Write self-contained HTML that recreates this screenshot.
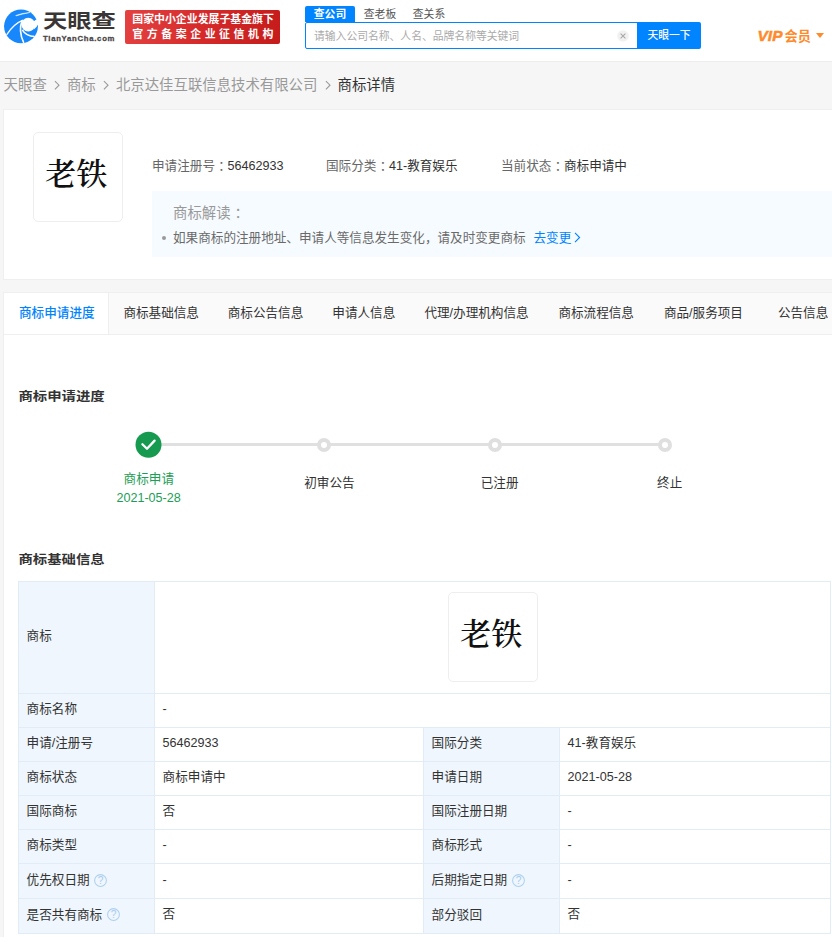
<!DOCTYPE html>
<html lang="zh-CN">
<head>
<meta charset="utf-8">
<title>老铁 - 商标详情 - 天眼查</title>
<style>
*{box-sizing:border-box;margin:0;padding:0}
html,body{width:832px;height:937px;overflow:hidden}
body{background:#f6f6f6;font-family:"Liberation Sans","Noto Sans CJK SC",sans-serif;font-size:12.6px;line-height:18px;color:#333;position:relative}
.a{position:absolute;white-space:nowrap}
.c{position:relative;left:0.27em}
/* header */
#hd{position:absolute;left:0;top:0;width:832px;height:62px;background:#fff;border-bottom:1px solid #ededed}
#logo-ico{position:absolute;left:0;top:5px;width:45px;height:43px}
#logo-t{left:42.6px;top:6.1px;font-size:20px;line-height:30px;font-weight:700;color:#3b3636;transform-origin:0 50%;transform:scale(1.213,0.99)}
#logo-s{left:43.2px;top:32px;font-size:12px;line-height:14px;font-weight:700;color:#4a4646;-webkit-text-stroke:0.45px #4a4646;letter-spacing:1.1px;transform-origin:0 50%;transform:scale(0.645,0.6)}
#badge{position:absolute;left:125px;top:10px;width:155px;height:34px;border-radius:2px;background:linear-gradient(100deg,#e44141 0%,#d62a2a 50%,#c51b1b 100%);color:#fff;font-weight:700;font-size:10.9px;line-height:14px}
#badge span{position:absolute;left:7.3px;white-space:nowrap}
#badge .l1{top:2.4px}
#badge .l2{top:17px;letter-spacing:3.58px}
#stabs{position:absolute;left:305px;top:6px;height:16px;font-size:10.8px;line-height:16px;white-space:nowrap}
#stabs span{position:absolute;top:0;height:16px;width:50px;text-align:center;color:#555;line-height:17.4px}
#stabs .on{left:0;background:#0084ff;color:#fff;border-radius:2px 2px 0 0;font-weight:700}
#sbox{position:absolute;left:305px;top:22px;width:333px;height:27px;border:1px solid #0084ff;background:#fff;border-radius:2px 0 0 2px}
#sbox .ph{left:8px;top:4.9px;line-height:16px;font-size:10.8px;color:#aaa}
#sbox .clr{position:absolute;left:311px;top:7px;width:12px;height:12px}
#sbtn{position:absolute;left:637px;top:22px;width:64px;height:27px;background:#0084ff;color:#fff;font-size:10.8px;font-weight:500;line-height:26px;text-align:center;border-radius:0 2px 2px 0}
#vip{left:757.4px;top:27.2px;font-size:15.4px;line-height:18px;font-weight:700;font-style:italic;color:#ff8a2b;-webkit-text-stroke:0.5px #ff8a2b;letter-spacing:0.2px}
#vip2{left:784.6px;top:27.5px;font-size:13.1px;line-height:18px;font-weight:700;color:#ff8a2b}
#car{position:absolute;left:816px;top:33px;width:0;height:0;border-left:4px solid transparent;border-right:4px solid transparent;border-top:5px solid #ff8a2b}
/* breadcrumb */
#bc{left:3.6px;top:75px;font-size:14.4px;line-height:20px;color:#999}
#bc b{font-weight:400;color:#333}
#bc svg{display:inline-block;width:6.4px;height:11px;margin:0 6.6px 0 7.2px;vertical-align:-1.4px}
/* card1 */
#c1{position:absolute;left:3px;top:109px;width:831px;height:171px;background:#fff;border:1px solid #efefef}
.tm{position:absolute;width:90px;height:90px;border:1px solid #eee;border-radius:5px;background:#fff}
.tm span{position:absolute;left:-1.8px;top:-1.6px;width:88px;height:88px;font-family:"Liberation Serif","Noto Serif CJK SC",serif;font-size:31px;line-height:88px;text-align:center;color:#111;font-weight:600;white-space:nowrap}
.info{top:157.3px;color:#333}
.info em{font-style:normal;color:#666}
#tip{position:absolute;left:152px;top:191px;width:680px;height:66px;background:#f6fbff}
#tip .t{left:21px;top:11.8px;font-size:14.4px;line-height:20px;color:#999}
#tip .d{left:21px;top:37.6px;color:#6a6a6a}
#tip .lk{left:381.5px;top:37.6px;color:#0084ff}
#tip .dot{position:absolute;left:10px;top:45px;width:4px;height:4px;border-radius:50%;background:#999}
#tip svg{position:absolute;left:422px;top:41px;width:7px;height:11px}
/* tabs */
#tabs{position:absolute;left:3px;top:292px;width:831px;height:43px;background:#fafafa;border:1px solid #efefef}
#tabs span{position:absolute;top:11px;color:#333;white-space:nowrap}
#tabs i{position:absolute;left:0;top:0;width:105px;height:41px;background:#fff;border-right:1px solid #efefef}
#tabs .on{color:#0084ff;font-weight:500}
/* main */
#main{position:absolute;left:3px;top:335px;width:831px;height:610px;background:#fff;border-left:1px solid #efefef}
.h{font-size:14.4px;line-height:20px;font-weight:700;color:#333;left:18.4px;transform:scaleY(0.86);transform-origin:0 54%}
/* progress */
#line{position:absolute;left:150px;top:443px;width:515px;height:3px;background:#e0e0e0}
.nd{position:absolute;top:437.5px;width:14.4px;height:14.4px;border-radius:50%;border:4.2px solid #dfdfdf;background:#fff}
#ok{position:absolute;left:135px;top:431px;width:27px;height:27px}
.lb{color:#333;text-align:center;transform:translateX(-50%)}
.g{color:#1c9e55}
/* table */
#tb{position:absolute;left:18px;top:581px;width:813px;height:353px;border:1px solid #e2ecf6;background:#fff}
.kb{position:absolute;background:#eff6fd}
.hl{position:absolute;left:18px;width:813px;height:1px;background:#e2ecf6}
.vl{position:absolute;width:1px;background:#e2ecf6}
.q{position:absolute;width:13px;height:13px}
</style>
</head>
<body>
<div id="hd">
  <svg id="logo-ico" viewBox="0 0 832 795">
    <circle cx="388" cy="395" r="313" fill="#1787fb"/>
    <circle cx="522" cy="364" r="126" fill="#fff"/>
    <path d="M625 300 L664 272 L760 250 L760 372 L698 364 Q678 420 625 452 L600 350Z" fill="#fff"/>
    <path d="M425 280 Q250 350 122 552" fill="none" stroke="#fff" stroke-width="23"/>
    <path d="M408 285 Q335 480 440 700" fill="none" stroke="#fff" stroke-width="30"/>
    <path d="M412 462 Q480 580 640 583" fill="none" stroke="#fff" stroke-width="28"/>
    <path d="M290 195 Q400 150 555 138 Q420 165 300 200Z" fill="#fff" stroke="#fff" stroke-width="9" stroke-linejoin="round"/>
  </svg>
  <div id="logo-t" class="a">天眼查</div>
  <div id="logo-s" class="a">TianYanCha.com</div>
  <div id="badge"><span class="l1">国家中小企业发展子基金旗下</span><span class="l2">官方备案企业征信机构</span></div>
  <div id="stabs"><span class="on">查公司</span><span style="left:50px">查老板</span><span style="left:99px">查关系</span></div>
  <div id="sbox"><span class="ph a">请输入公司名称、人名、品牌名称等关键词</span><svg class="clr" viewBox="0 0 12 12"><circle cx="6" cy="6" r="5.8" fill="#f1f1f1"/><path d="M3.6 3.6L8.4 8.4M8.4 3.6L3.6 8.4" stroke="#a8a8a8" stroke-width="1.1" fill="none"/></svg></div>
  <div id="sbtn">天眼一下</div>
  <div id="vip" class="a">VIP</div><div id="vip2" class="a">会员</div>
  <div id="car"></div>
</div>
<div id="bc" class="a">天眼查<svg viewBox="0 0 6.4 11"><path d="M0.9 1.1L5 5.2L0.9 9.3" fill="none" stroke="#999" stroke-width="1.1"/></svg>商标<svg viewBox="0 0 6.4 11"><path d="M0.9 1.1L5 5.2L0.9 9.3" fill="none" stroke="#999" stroke-width="1.1"/></svg>北京达佳互联信息技术有限公司<svg viewBox="0 0 6.4 11"><path d="M0.9 1.1L5 5.2L0.9 9.3" fill="none" stroke="#999" stroke-width="1.1"/></svg><b>商标详情</b></div>
<div id="c1"></div>
<div class="tm" style="left:33px;top:132px"><span>老铁</span></div>
<div class="info a" style="left:152px"><em>申请注册号<span class="c">：</span></em>56462933</div>
<div class="info a" style="left:326px"><em>国际分类<span class="c">：</span></em>41-教育娱乐</div>
<div class="info a" style="left:501px"><em>当前状态<span class="c">：</span></em>商标申请中</div>
<div id="tip"><span class="t a">商标解读<span class="c">：</span></span><span class="dot"></span><span class="d a">如果商标的注册地址、申请人等信息发生变化，请及时变更商标</span><span class="lk a">去变更</span><svg viewBox="0 0 7 11"><path d="M1 0.8L5.6 5.5L1 10.2" fill="none" stroke="#0084ff" stroke-width="1.1"/></svg></div>
<div id="tabs"><i></i><span class="on" style="left:15.0px">商标申请进度</span><span style="left:119.4px">商标基础信息</span><span style="left:223.7px">商标公告信息</span><span style="left:328.3px">申请人信息</span><span style="left:420.4px">代理/办理机构信息</span><span style="left:554.4px">商标流程信息</span><span style="left:659.9px">商品/服务项目</span><span style="left:773.9px">公告信息</span></div>
<div id="main"></div>
<div class="h a" style="top:387.4px">商标申请进度</div>
<div id="line"></div>
<svg id="ok" viewBox="0 0 27 27"><circle cx="13.5" cy="13.8" r="13" fill="#169a4f"/><path d="M7.4 13.2 L12 17.8 L19.6 9.6" fill="none" stroke="#fff" stroke-width="2.3" stroke-linecap="round" stroke-linejoin="round"/></svg>
<div class="nd" style="left:317.1px"></div><div class="nd" style="left:487.8px"></div><div class="nd" style="left:657.8px"></div>
<div class="lb a g" style="left:148.8px;top:470px">商标申请</div>
<div class="lb a g" style="left:148.6px;top:489px">2021-05-28</div>
<div class="lb a" style="left:329.4px;top:474px">初审公告</div>
<div class="lb a" style="left:499.6px;top:474px">已注册</div>
<div class="lb a" style="left:669.7px;top:474px">终止</div>
<div class="h a" style="top:549.9px">商标基础信息</div>
<div id="tb"></div>
<div class="kb" style="left:19px;top:582px;width:135px;height:351px"></div>
<div class="kb" style="left:424px;top:728px;width:135px;height:205px"></div>
<div class="hl" style="top:693px"></div><div class="hl" style="top:727px"></div><div class="hl" style="top:761px"></div><div class="hl" style="top:795px"></div><div class="hl" style="top:829px"></div><div class="hl" style="top:863px"></div><div class="hl" style="top:898px"></div>
<div class="vl" style="left:154px;top:581px;height:353px"></div><div class="vl" style="left:423px;top:727px;height:207px"></div><div class="vl" style="left:559px;top:727px;height:207px"></div>
<div class="tm" style="left:448px;top:592px"><span>老铁</span></div>
<div class="a" style="left:26.6px;top:626.7px">商标</div>
<div class="a" style="left:26.6px;top:700.3px">商标名称</div><div class="a" style="left:162.6px;top:700.3px">-</div>
<div class="a" style="left:26.6px;top:734.3px">申请/注册号</div><div class="a" style="left:162.6px;top:734.3px">56462933</div><div class="a" style="left:431.6px;top:734.3px">国际分类</div><div class="a" style="left:567.6px;top:734.3px">41-教育娱乐</div>
<div class="a" style="left:26.6px;top:768.3px">商标状态</div><div class="a" style="left:162.6px;top:768.3px">商标申请中</div><div class="a" style="left:431.6px;top:768.3px">申请日期</div><div class="a" style="left:567.6px;top:768.3px">2021-05-28</div>
<div class="a" style="left:26.6px;top:802.3px">国际商标</div><div class="a" style="left:162.6px;top:802.3px">否</div><div class="a" style="left:431.6px;top:802.3px">国际注册日期</div><div class="a" style="left:567.6px;top:802.3px">-</div>
<div class="a" style="left:26.6px;top:836.3px">商标类型</div><div class="a" style="left:162.6px;top:836.3px">-</div><div class="a" style="left:431.6px;top:836.3px">商标形式</div><div class="a" style="left:567.6px;top:836.3px">-</div>
<div class="a" style="left:26.6px;top:870.7px">优先权日期</div><div class="a" style="left:162.6px;top:870.7px">-</div><div class="a" style="left:431.6px;top:870.7px">后期指定日期</div><div class="a" style="left:567.6px;top:870.7px">-</div>
<div class="a" style="left:26.6px;top:905.7px">是否共有商标</div><div class="a" style="left:162.6px;top:904.7px">否</div><div class="a" style="left:431.6px;top:905.7px">部分驳回</div><div class="a" style="left:567.6px;top:904.7px">否</div>
<svg class="q" style="left:94.4px;top:873.5px" viewBox="0 0 13 13"><circle cx="6.5" cy="6.5" r="5.9" fill="none" stroke="#add0f1" stroke-width="1.05"/><text x="6.5" y="10.2" font-size="10.2" font-family="Liberation Sans, sans-serif" text-anchor="middle" fill="#a6cbef">?</text></svg>
<svg class="q" style="left:106.9px;top:908.2px" viewBox="0 0 13 13"><circle cx="6.5" cy="6.5" r="5.9" fill="none" stroke="#add0f1" stroke-width="1.05"/><text x="6.5" y="10.2" font-size="10.2" font-family="Liberation Sans, sans-serif" text-anchor="middle" fill="#a6cbef">?</text></svg>
<svg class="q" style="left:512px;top:873.5px" viewBox="0 0 13 13"><circle cx="6.5" cy="6.5" r="5.9" fill="none" stroke="#add0f1" stroke-width="1.05"/><text x="6.5" y="10.2" font-size="10.2" font-family="Liberation Sans, sans-serif" text-anchor="middle" fill="#a6cbef">?</text></svg>
</body>
</html>
